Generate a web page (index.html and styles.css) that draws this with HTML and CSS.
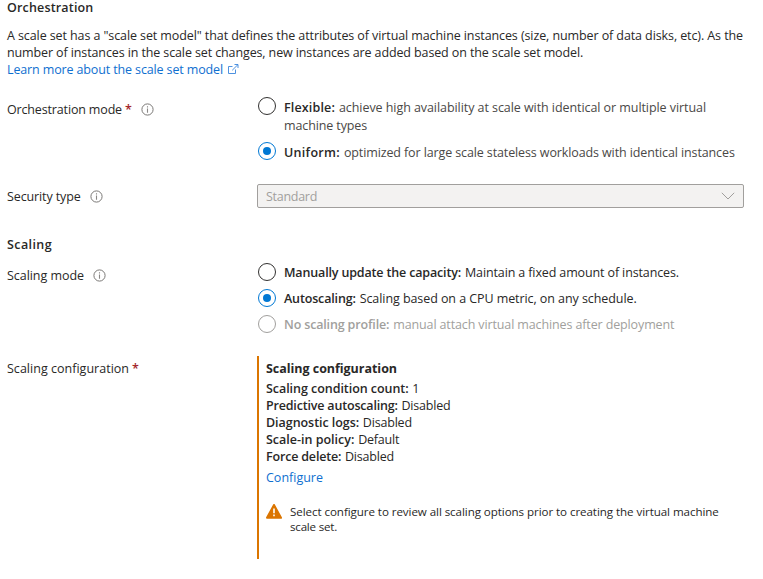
FILE: index.html
```html
<!DOCTYPE html>
<html lang="en">
<head>
<meta charset="utf-8">
<title>Scale set orchestration</title>
<link rel="stylesheet" href="styles.css">
</head>
<body>
<svg class="defs" width="0" height="0">
  <symbol id="info" viewBox="0 0 13 13">
    <circle cx="6.5" cy="6.5" r="5.6" fill="none" stroke="#7a7876"/>
    <path d="M6.5 3.2v1.3M6.5 5.6v4.2" fill="none" stroke="#8a8886" stroke-width="1.1"/>
  </symbol>
</svg>
<main class="page">
  <h2 class="heading heading-orch">Orchestration</h2>
  <div class="intro">
    <div class="intro-a">A scale set has a "scale set model" that defines the attributes of virtual machine instances (size, number of data disks, etc). As the</div>
    <div class="intro-b">number of instances in the scale set changes, new instances are added based on the scale set model.</div>
    <a class="link"><span class="learn">Learn more about the scale set model</span><svg class="ext" width="12" height="12" viewBox="0 0 12 12" fill="none" stroke="#3b86dc"><path d="M5.5 3.5h-4v7h7v-4M7.5 1.5h3.5V5M11 1.5 5.2 7.3" stroke-width=".9"/></svg></a>
  </div>

  <section class="row row-orch">
    <div class="label"><span class="t-orch">Orchestration mode</span><span class="req">*</span><svg class="info"><use href="#info"/></svg></div>
    <div class="options">
      <div class="option"><i class="radio"></i><div class="text soft"><b class="t-flex">Flexible:</b> <span class="t-achieve">achieve high availability at scale with identical or multiple virtual</span><br><span>machine types</span></div></div>
      <div class="option"><i class="radio on"></i><div class="text soft"><b class="t-uni">Uniform:</b> <span>optimized for large scale stateless workloads with identical instances</span></div></div>
    </div>
  </section>

  <section class="row row-security">
    <div class="label"><span>Security type</span><svg class="info"><use href="#info"/></svg></div>
    <div class="select"><span>Standard</span><svg width="14" height="8" viewBox="0 0 14 8" fill="none" stroke="#a19f9d"><path d="M.8.8 7 7 13.2.8"/></svg></div>
  </section>

  <h2 class="heading heading-scaling">Scaling</h2>

  <section class="row row-mode">
    <div class="label"><span class="t-mode">Scaling mode</span><svg class="info"><use href="#info"/></svg></div>
    <div class="options tight">
      <div class="option"><i class="radio"></i><div class="text"><b>Manually update the capacity:</b> <span class="t-maintain">Maintain a fixed amount of instances.</span></div></div>
      <div class="option"><i class="radio on"></i><div class="text"><b>Autoscaling:</b> <span class="t-based">Scaling based on a CPU metric, on any schedule.</span></div></div>
      <div class="option off"><i class="radio"></i><div class="text"><b>No scaling profile:</b> <span class="t-maintain">manual attach virtual machines after deployment</span></div></div>
    </div>
  </section>

  <section class="row row-config">
    <div class="label"><span class="t-config">Scaling configuration</span><span class="req">*</span></div>
    <div class="panel">
      <h3>Scaling configuration</h3>
      <div><b class="t-cond">Scaling condition count:</b> <span>1</span></div>
      <div><b class="t-pred">Predictive autoscaling:</b> <span class="val">Disabled</span></div>
      <div><b class="t-cond">Diagnostic logs:</b> <span class="val">Disabled</span></div>
      <div><b class="t-policy">Scale-in policy:</b> <span class="val">Default</span></div>
      <div><b class="t-pred">Force delete:</b> <span class="val">Disabled</span></div>
      <a class="link configure">Configure</a>
      <div class="warning">
        <svg width="16" height="15" viewBox="0 0 16 15"><path d="M8 1 15 13.8H1Z" fill="#db7500" stroke="#db7500" stroke-width="2" stroke-linejoin="round"/><path d="M8 4.4v4.8M8 10.6v1.7" stroke="#fff" stroke-width="1.6"/></svg>
        <div>Select configure to review all scaling options prior to creating the virtual machine<br><span class="t-end">scale set.</span></div>
      </div>
    </div>
  </section>
</main>
</body>
</html>
```
FILE: styles.css
```css
* { box-sizing: border-box; }
body { margin: 0; background: #fff; color: #292827; font: 12.5px/17px "Open Sans", sans-serif; letter-spacing: -.115px; white-space: nowrap; }
.defs { position: absolute; }
.page { padding-left: 7px; height: 579px; overflow: hidden; }
b { font-weight: 600; letter-spacing: -.155px; }
.heading { margin: 0; font-size: 12.5px; line-height: 15px; font-weight: 600; }
.heading-orch { letter-spacing: .17px; }
.heading-scaling { margin-top: 29px; letter-spacing: .4px; }
.intro { margin-top: 12px; }
.intro-a { letter-spacing: -.095px; }
.link { color: #0f6fd0; display: flex; }
.learn { letter-spacing: -.133px; }
.ext { margin: 2px 0 0 4px; }

.row { display: grid; grid-template-columns: 250px 487px; align-items: start; }
.row-orch { margin-top: 19px; }
.row-security { margin-top: 23px; }
.row-mode { margin-top: 11px; }
.row-config { margin-top: 23px; }
.label { display: flex; padding-top: 4px; }
.info { width: 13px; height: 13px; margin: 2.4px 0 0 9px; }
.req { color: #a4262c; margin-left: 3px; font-weight: 600; width: 6px; }
.req + .info { margin-left: 10.5px; }

.options { display: grid; gap: 8px; }
.option { display: flex; gap: 8px; line-height: 18px; }
.text { padding-top: 2px; margin-bottom: -1px; }
.text b + span { margin-left: .8px; }
.soft { color: #4a4846; }
.soft b { color: #292827; }
.tight .text { padding-top: 1px; }
.radio { flex: none; width: 18px; height: 18px; margin-left: 1px; border: 1px solid #323130; border-radius: 50%; display: grid; place-items: center; }
.radio.on { border-color: #0078d4; }
.radio.on::after { content: ""; width: 8px; height: 8px; border-radius: 50%; background: #0078d4; }
.off { color: #a19f9d; }
.off .radio { border-color: #a19f9d; }

.select { height: 24px; border: 1px solid #a19f9d; border-radius: 2px; background: #f3f2f1; color: #a19f9d; padding: 0 8px; display: flex; align-items: center; justify-content: space-between; letter-spacing: -.28px; }

.panel { height: 203px; border-left: 2px solid #db7500; padding: 4px 0 0 7px; }
.panel h3 { margin: 0 0 3px; font-size: 12.5px; line-height: 17px; font-weight: 700; letter-spacing: -.035px; }
.panel b + span { margin-left: .6px; }
.val { letter-spacing: -.2px; }
.configure { margin-top: 4px; letter-spacing: 0; }
.warning { display: flex; gap: 8px; margin-top: 18px; font-size: 11.6px; line-height: 15px; letter-spacing: -.076px; }

.t-orch { letter-spacing: -.155px; }
.t-flex { letter-spacing: .155px; }
.t-achieve { letter-spacing: -.065px; }
.t-uni { letter-spacing: .29px; }
.t-mode { letter-spacing: -.05px; }
.t-maintain { letter-spacing: -.126px; }
.t-based { letter-spacing: -.072px; }
.t-config { letter-spacing: .02px; }
.t-cond { letter-spacing: -.05px; }
.t-pred { letter-spacing: -.18px; }
.t-policy { letter-spacing: 0; }
.t-end { letter-spacing: -.22px; }
```
